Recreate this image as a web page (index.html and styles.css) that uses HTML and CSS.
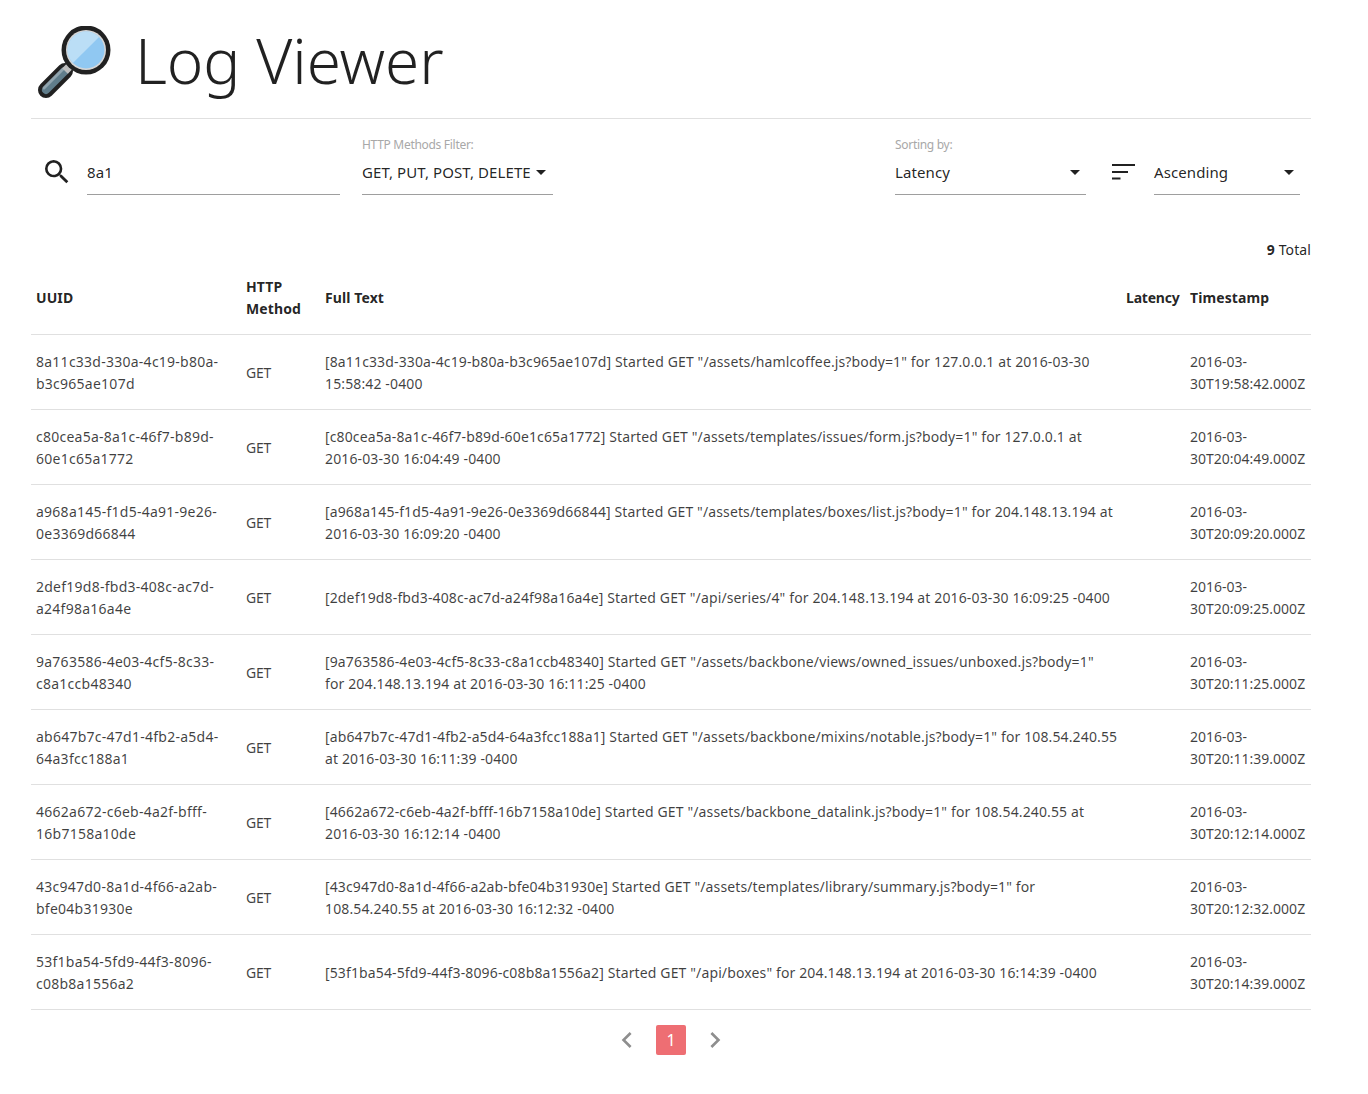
FILE: index.html
```html
<!DOCTYPE html>
<html lang="en">
<head>
<meta charset="utf-8">
<title>Log Viewer</title>
<link rel="stylesheet" href="styles.css">
</head>
<body>
<div class="page">
  <header class="title">
    <svg class="logo" width="74" height="72" viewBox="0 0 74 72">
      <path d="M8 64 L27 45" stroke="#212121" stroke-width="16" stroke-linecap="round" fill="none"/>
      <path d="M8 64 L27 45" stroke="#607d8b" stroke-width="8" stroke-linecap="round" fill="none"/>
      <path d="M6 62 L25 43" stroke="#90a4ae" stroke-width="3" stroke-linecap="round" fill="none"/>
      <path d="M27 45 L33 39" stroke="#bdbdbd" stroke-width="8" fill="none"/>
      <circle cx="48" cy="24" r="24.5" fill="#212121"/>
      <circle cx="48" cy="24" r="20" fill="#d6d6d6"/>
      <circle cx="48" cy="24" r="18.5" fill="#90c8f2"/>
      <path d="M34.9 37.1 A18.5 18.5 0 0 1 61.1 10.9 Z" fill="#bbdef6"/>
    </svg>
    <h1>Log Viewer</h1>
  </header>

  <section class="filters">
    <svg class="search-icon" width="32" height="32" viewBox="0 0 24 24"><path fill="#212121" d="M15.5 14h-.79l-.28-.27A6.471 6.471 0 0 0 16 9.5 6.5 6.5 0 1 0 9.5 16c1.61 0 3.09-.59 4.23-1.57l.27.28v.79l5 4.99L20.49 19l-4.99-5zm-6 0C7.01 14 5 11.99 5 9.5S7.01 5 9.5 5 14 7.01 14 9.5 11.99 14 9.5 14z"/></svg>
    <div class="field search"><span class="value">8a1</span></div>
    <div class="labelled methods">
      <label>HTTP Methods Filter:</label>
      <div class="field"><span class="value">GET, PUT, POST, DELETE</span><i class="caret"></i></div>
    </div>
    <div class="spacer"></div>
    <div class="labelled sort">
      <label>Sorting by:</label>
      <div class="field between"><span class="value">Latency</span><i class="caret"></i></div>
    </div>
    <svg class="sort-icon" width="24" height="24" viewBox="0 0 24 24"><path fill="#212121" d="M0 4h23v2H0zM0 11h16v2H0zM0 17.500h8.500v2H0z"/></svg>
    <div class="field between order"><span class="value">Ascending</span><i class="caret"></i></div>
  </section>

  <div class="total"><b>9</b> Total</div>

  <table class="logs">
    <thead>
      <tr><th class="c-uuid">UUID</th><th class="c-method">HTTP<br>Method</th><th class="c-text">Full Text</th><th class="c-lat">Latency</th><th class="c-time">Timestamp</th></tr>
    </thead>
    <tbody>
      <tr><td class="uuid">8a11c33d-330a-4c19-b80a-<br>b3c965ae107d</td><td class="method">GET</td><td class="full">[8a11c33d-330a-4c19-b80a-b3c965ae107d] Started GET "/assets/hamlcoffee.js?body=1" for 127.0.0.1 at 2016-03-30<br>15:58:42 -0400</td><td></td><td class="stamp">2016-03-<br>30T19:58:42.000Z</td></tr>
      <tr><td class="uuid">c80cea5a-8a1c-46f7-b89d-<br>60e1c65a1772</td><td class="method">GET</td><td class="full">[c80cea5a-8a1c-46f7-b89d-60e1c65a1772] Started GET "/assets/templates/issues/form.js?body=1" for 127.0.0.1 at<br>2016-03-30 16:04:49 -0400</td><td></td><td class="stamp">2016-03-<br>30T20:04:49.000Z</td></tr>
      <tr><td class="uuid">a968a145-f1d5-4a91-9e26-<br>0e3369d66844</td><td class="method">GET</td><td class="full">[a968a145-f1d5-4a91-9e26-0e3369d66844] Started GET "/assets/templates/boxes/list.js?body=1" for 204.148.13.194 at<br>2016-03-30 16:09:20 -0400</td><td></td><td class="stamp">2016-03-<br>30T20:09:20.000Z</td></tr>
      <tr><td class="uuid">2def19d8-fbd3-408c-ac7d-<br>a24f98a16a4e</td><td class="method">GET</td><td class="full">[2def19d8-fbd3-408c-ac7d-a24f98a16a4e] Started GET "/api/series/4" for 204.148.13.194 at 2016-03-30 16:09:25 -0400</td><td></td><td class="stamp">2016-03-<br>30T20:09:25.000Z</td></tr>
      <tr><td class="uuid">9a763586-4e03-4cf5-8c33-<br>c8a1ccb48340</td><td class="method">GET</td><td class="full">[9a763586-4e03-4cf5-8c33-c8a1ccb48340] Started GET "/assets/backbone/views/owned_issues/unboxed.js?body=1"<br>for 204.148.13.194 at 2016-03-30 16:11:25 -0400</td><td></td><td class="stamp">2016-03-<br>30T20:11:25.000Z</td></tr>
      <tr><td class="uuid">ab647b7c-47d1-4fb2-a5d4-<br>64a3fcc188a1</td><td class="method">GET</td><td class="full">[ab647b7c-47d1-4fb2-a5d4-64a3fcc188a1] Started GET "/assets/backbone/mixins/notable.js?body=1" for 108.54.240.55<br>at 2016-03-30 16:11:39 -0400</td><td></td><td class="stamp">2016-03-<br>30T20:11:39.000Z</td></tr>
      <tr><td class="uuid">4662a672-c6eb-4a2f-bfff-<br>16b7158a10de</td><td class="method">GET</td><td class="full">[4662a672-c6eb-4a2f-bfff-16b7158a10de] Started GET "/assets/backbone_datalink.js?body=1" for 108.54.240.55 at<br>2016-03-30 16:12:14 -0400</td><td></td><td class="stamp">2016-03-<br>30T20:12:14.000Z</td></tr>
      <tr><td class="uuid">43c947d0-8a1d-4f66-a2ab-<br>bfe04b31930e</td><td class="method">GET</td><td class="full">[43c947d0-8a1d-4f66-a2ab-bfe04b31930e] Started GET "/assets/templates/library/summary.js?body=1" for<br>108.54.240.55 at 2016-03-30 16:12:32 -0400</td><td></td><td class="stamp">2016-03-<br>30T20:12:32.000Z</td></tr>
      <tr><td class="uuid">53f1ba54-5fd9-44f3-8096-<br>c08b8a1556a2</td><td class="method">GET</td><td class="full">[53f1ba54-5fd9-44f3-8096-c08b8a1556a2] Started GET "/api/boxes" for 204.148.13.194 at 2016-03-30 16:14:39 -0400</td><td></td><td class="stamp">2016-03-<br>30T20:14:39.000Z</td></tr>
    </tbody>
  </table>

  <nav class="pager">
    <svg width="32" height="32" viewBox="0 0 24 24"><path fill="#8e8e8e" d="M15.41 7.41L14 6l-6 6 6 6 1.41-1.41L10.83 12z"/></svg>
    <span class="page-num">1</span>
    <svg width="32" height="32" viewBox="0 0 24 24"><path fill="#8e8e8e" d="M8.59 16.59L10 18l6-6-6-6-1.41 1.41L13.17 12z"/></svg>
  </nav>
</div>
</body>
</html>
```
FILE: styles.css
```css
* { box-sizing: border-box; }
html, body { margin: 0; background: #fff; }
body {
  font-family: "Noto Sans", "Open Sans", sans-serif;
  font-size: 14px;
  color: rgba(0, 0, 0, .87);
}
.page { width: 1280px; margin-left: 31px; height: 1094px; }

.title {
  display: flex;
  align-items: center;
  height: 119px;
  border-bottom: 1px solid #e0e0e0;
  padding: 26px 0 20px 7px;
}
.logo { flex: none; }
h1 {
  margin: -5px 0 0 23px;
  font-size: 62px;
  font-weight: 300;
  line-height: 72px;
  letter-spacing: -0.1px;
}

.filters {
  display: flex;
  align-items: flex-end;
  height: 76px;
}
.search-icon { margin: 0 14px 7px 10px; flex: none; }
.field {
  display: flex;
  align-items: center;
  height: 34px;
  border-bottom: 1px solid #9e9e9e;
  padding-bottom: 11px;
  font-size: 15px;
  letter-spacing: .1px;
  color: rgba(0, 0, 0, .87);
}
.between { justify-content: space-between; padding-right: 6px; }
.search { width: 253px; margin-right: 22px; }
.labelled label {
  display: block;
  font-size: 12px;
  letter-spacing: -.3px;
  color: #a8a8a8;
  line-height: 16px;
  margin-bottom: 8px;
}
.methods { width: 191px; }
.spacer { flex: 1; }
.sort { width: 191px; }
.sort-icon { margin: 0 18px 11px 26px; flex: none; }
.order { width: 146px; margin-right: 11px; }
.caret {
  display: inline-block;
  width: 0;
  height: 0;
  border-left: 5px solid transparent;
  border-right: 5px solid transparent;
  border-top: 5px solid #212121;
  margin-left: 5px;
}

.total { text-align: right; margin-top: 44px; line-height: 22px; letter-spacing: .1px; }

.logs {
  width: 1280px;
  table-layout: fixed;
  border-collapse: collapse;
  margin-top: 1px;
}
.c-uuid { width: 210px; }
.c-method { width: 79px; }
.c-text { width: 801px; }
.c-lat { width: 64px; }
.c-time { width: 126px; }
.logs th {
  text-align: left;
  font-weight: 700;
  line-height: 22px;
  padding: 14px 5px;
  white-space: nowrap;
  letter-spacing: .1px;
  border-bottom: 1px solid #e0e0e0;
}
.logs th.c-lat { letter-spacing: -.2px; }
.logs td {
  line-height: 22px;
  padding: 16px 5px 14px;
  height: 75px;
  white-space: nowrap;
  border-bottom: 1px solid #e0e0e0;
  color: rgba(0, 0, 0, .75);
}
.logs .uuid { letter-spacing: .25px; }
.logs .method { letter-spacing: -.2px; }
.logs .full { letter-spacing: .13px; }
.logs .stamp { letter-spacing: 0; }

.pager {
  display: flex;
  justify-content: center;
  align-items: center;
  gap: 13px;
  margin-top: 14px;
}
.page-num {
  width: 30px;
  height: 30px;
  border-radius: 2px;
  background: #ee6e73;
  color: #fff;
  font-size: 16px;
  line-height: 30px;
  text-align: center;
}
```
